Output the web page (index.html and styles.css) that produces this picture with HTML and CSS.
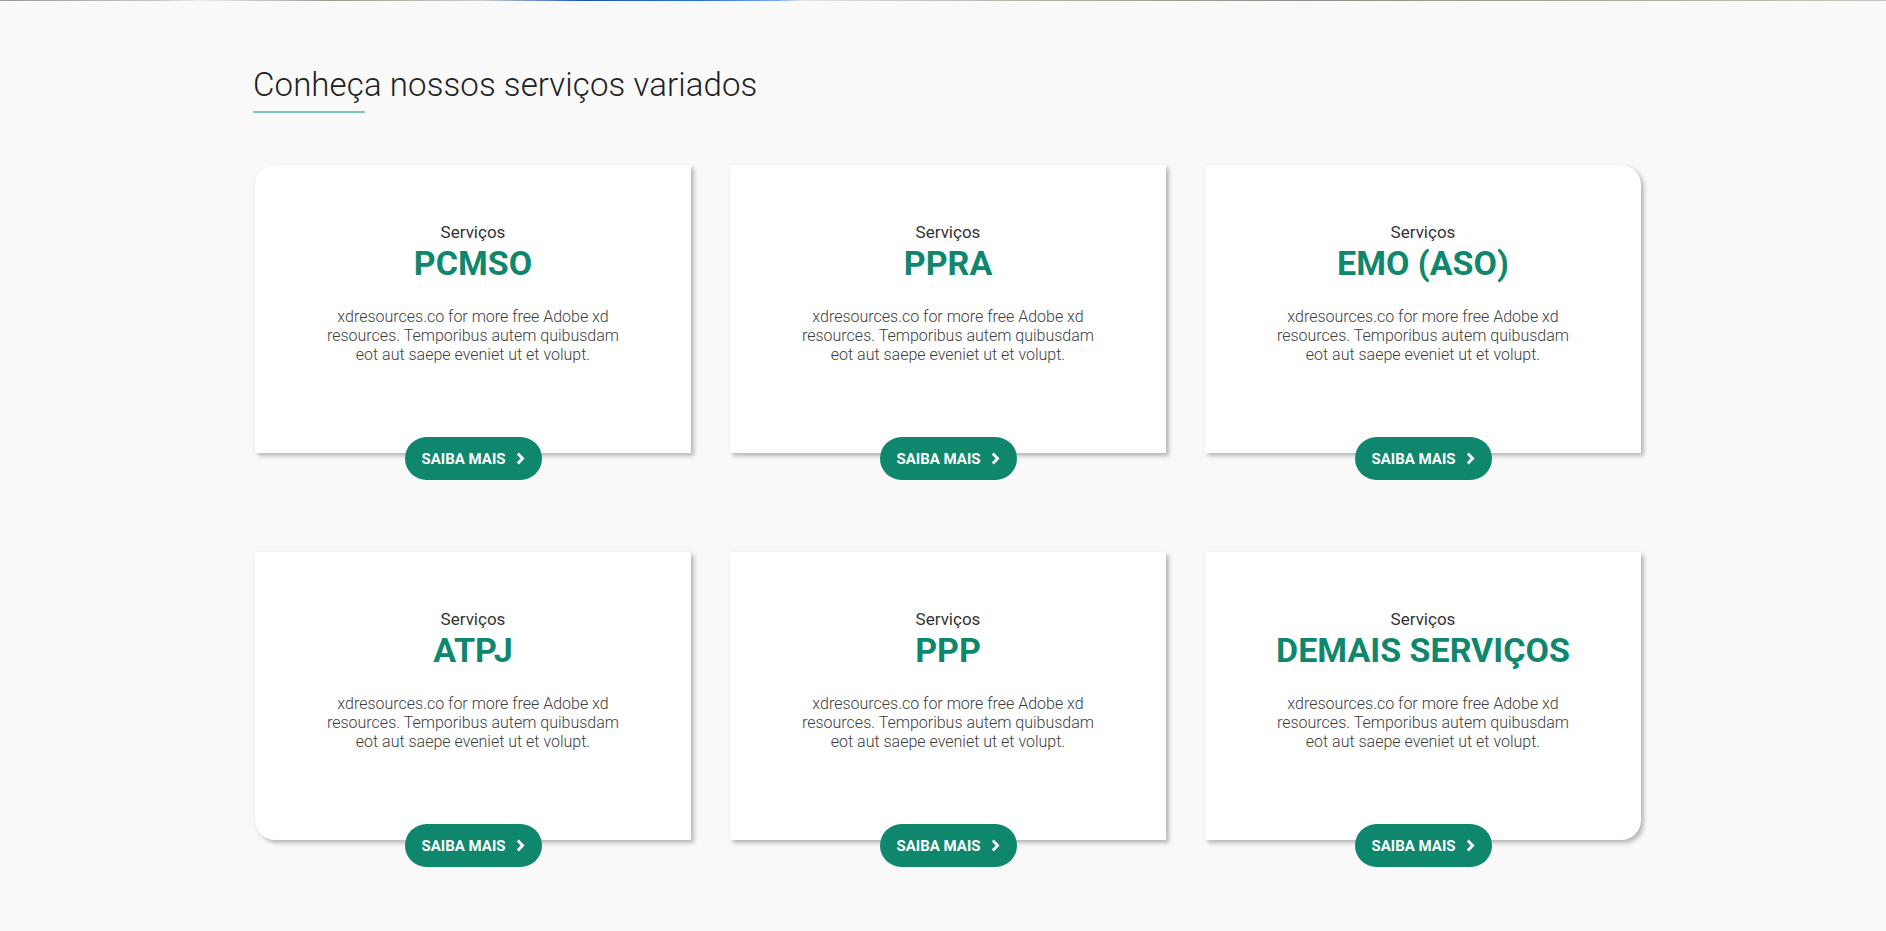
FILE: index.html
```html
<!DOCTYPE html>
<html lang="pt-BR">
<head>
    <meta charset="UTF-8" />
    <title>Serviços</title>
    <link rel="stylesheet" href="styles.css">
</head>
<body>
    <div class="top-strip"></div>
    <section class="services">
        <h2 class="title">Conheça nossos serviços variados</h2>
        <div class="grid">
            <div class="card round-tl">
                <span class="label">Serviços</span>
                <h3>PCMSO</h3>
                <p>xdresources.co for more free Adobe xd resources. Temporibus autem quibusdam eot aut saepe eveniet ut et volupt.</p>
                <a href="#" class="btn">SAIBA MAIS <svg width="9" height="13" viewBox="0 0 9 13"><path d="M1.8 1.6 6.6 6.5l-4.8 4.9" fill="none" stroke="#fff" stroke-width="2.8"/></svg></a>
            </div>
            <div class="card">
                <span class="label">Serviços</span>
                <h3>PPRA</h3>
                <p>xdresources.co for more free Adobe xd resources. Temporibus autem quibusdam eot aut saepe eveniet ut et volupt.</p>
                <a href="#" class="btn">SAIBA MAIS <svg width="9" height="13" viewBox="0 0 9 13"><path d="M1.8 1.6 6.6 6.5l-4.8 4.9" fill="none" stroke="#fff" stroke-width="2.8"/></svg></a>
            </div>
            <div class="card round-tr">
                <span class="label">Serviços</span>
                <h3>EMO (ASO)</h3>
                <p>xdresources.co for more free Adobe xd resources. Temporibus autem quibusdam eot aut saepe eveniet ut et volupt.</p>
                <a href="#" class="btn">SAIBA MAIS <svg width="9" height="13" viewBox="0 0 9 13"><path d="M1.8 1.6 6.6 6.5l-4.8 4.9" fill="none" stroke="#fff" stroke-width="2.8"/></svg></a>
            </div>
            <div class="card round-bl">
                <span class="label">Serviços</span>
                <h3>ATPJ</h3>
                <p>xdresources.co for more free Adobe xd resources. Temporibus autem quibusdam eot aut saepe eveniet ut et volupt.</p>
                <a href="#" class="btn">SAIBA MAIS <svg width="9" height="13" viewBox="0 0 9 13"><path d="M1.8 1.6 6.6 6.5l-4.8 4.9" fill="none" stroke="#fff" stroke-width="2.8"/></svg></a>
            </div>
            <div class="card">
                <span class="label">Serviços</span>
                <h3>PPP</h3>
                <p>xdresources.co for more free Adobe xd resources. Temporibus autem quibusdam eot aut saepe eveniet ut et volupt.</p>
                <a href="#" class="btn">SAIBA MAIS <svg width="9" height="13" viewBox="0 0 9 13"><path d="M1.8 1.6 6.6 6.5l-4.8 4.9" fill="none" stroke="#fff" stroke-width="2.8"/></svg></a>
            </div>
            <div class="card round-br">
                <span class="label">Serviços</span>
                <h3>DEMAIS SERVIÇOS</h3>
                <p>xdresources.co for more free Adobe xd resources. Temporibus autem quibusdam eot aut saepe eveniet ut et volupt.</p>
                <a href="#" class="btn">SAIBA MAIS <svg width="9" height="13" viewBox="0 0 9 13"><path d="M1.8 1.6 6.6 6.5l-4.8 4.9" fill="none" stroke="#fff" stroke-width="2.8"/></svg></a>
            </div>
        </div>
    </section>
</body>
</html>
```

FILE: styles.css
```css
*{
    margin:0;
    padding:0;
    box-sizing:border-box;
}
body{
    background:#f9f9f9;
    font-family:Roboto, "Noto Sans", Arial, sans-serif;
    color:#333;
}
.top-strip{
    height:1px;
    background:linear-gradient(90deg, #9a9a94 0, #c9c9c4 160px, #e8ecf4 200px, #9b9b90 330px, #cfcfc8 480px, #1a55c8 583px, #2a6fe0 700px, #7aa6ee 776px, #dfe3ea 800px, #b7b7ad 1000px, #8d8d85 1300px, #a9a99e 1600px, #c8c8c0 1886px);
}
.services{
    padding:64px 0 80px 255px;
}
.title{
    font-size:33px;
    font-weight:300;
    line-height:40px;
    letter-spacing:0.1px;
    color:#222;
    margin-left:-2px;
    display:inline-block;
}
.title::after{
    content:"";
    display:block;
    width:112px;
    height:2px;
    background:#7fc5b7;
    margin-top:6px;
}
.grid{
    display:grid;
    grid-template-columns:repeat(3, 436px);
    column-gap:39px;
    row-gap:99px;
    margin-top:52px;
}
.card{
    height:288px;
    background:#fff;
    box-shadow:3px 3px 4px rgba(0,0,0,0.25), 0 0 4px rgba(0,0,0,0.04);
    display:flex;
    flex-direction:column;
    align-items:center;
    text-align:center;
    padding-top:56px;
}
.round-tl{ border-top-left-radius:20px; }
.round-tr{ border-top-right-radius:20px; }
.round-bl{ border-bottom-left-radius:20px; }
.round-br{ border-bottom-right-radius:20px; }
.label{
    font-size:17px;
    line-height:22px;
    color:#333;
}
.card h3{
    font-size:34px;
    line-height:40px;
    font-weight:700;
    color:#0e876d;
}
.card p{
    width:300px;
    margin-top:24px;
    font-size:16px;
    font-weight:300;
    line-height:19px;
    color:#3d3d3d;
}
.btn{
    margin-top:auto;
    margin-bottom:-27px;
    height:43px;
    width:137px;
    border-radius:22px;
    background:#0e876d;
    color:#fff;
    text-decoration:none;
    font-size:15px;
    font-weight:700;
    display:flex;
    align-items:center;
    justify-content:center;
    gap:10px;
}
```
